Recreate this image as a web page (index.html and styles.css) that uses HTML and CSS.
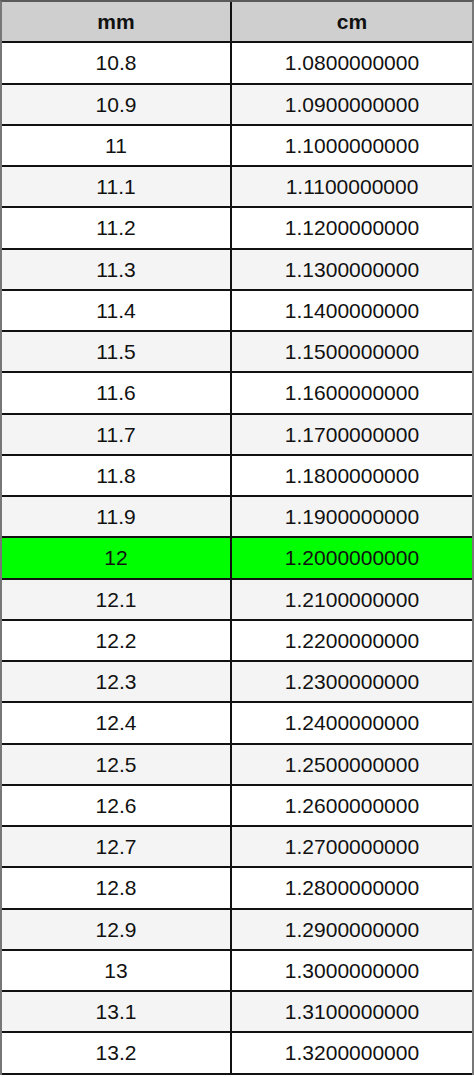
FILE: index.html
```html
<!DOCTYPE html>
<html>
<head>
<meta charset="utf-8">
<link rel="stylesheet" href="styles.css">
</head>
<body>
<div class="table">
  <div class="row head"><div class="cell">mm</div><div class="cell">cm</div></div>
  <div class="row"><div class="cell">10.8</div><div class="cell">1.0800000000</div></div>
  <div class="row alt"><div class="cell">10.9</div><div class="cell">1.0900000000</div></div>
  <div class="row"><div class="cell">11</div><div class="cell">1.1000000000</div></div>
  <div class="row alt"><div class="cell">11.1</div><div class="cell">1.1100000000</div></div>
  <div class="row"><div class="cell">11.2</div><div class="cell">1.1200000000</div></div>
  <div class="row alt"><div class="cell">11.3</div><div class="cell">1.1300000000</div></div>
  <div class="row"><div class="cell">11.4</div><div class="cell">1.1400000000</div></div>
  <div class="row alt"><div class="cell">11.5</div><div class="cell">1.1500000000</div></div>
  <div class="row"><div class="cell">11.6</div><div class="cell">1.1600000000</div></div>
  <div class="row alt"><div class="cell">11.7</div><div class="cell">1.1700000000</div></div>
  <div class="row"><div class="cell">11.8</div><div class="cell">1.1800000000</div></div>
  <div class="row alt"><div class="cell">11.9</div><div class="cell">1.1900000000</div></div>
  <div class="row hl"><div class="cell">12</div><div class="cell">1.2000000000</div></div>
  <div class="row alt"><div class="cell">12.1</div><div class="cell">1.2100000000</div></div>
  <div class="row"><div class="cell">12.2</div><div class="cell">1.2200000000</div></div>
  <div class="row alt"><div class="cell">12.3</div><div class="cell">1.2300000000</div></div>
  <div class="row"><div class="cell">12.4</div><div class="cell">1.2400000000</div></div>
  <div class="row alt"><div class="cell">12.5</div><div class="cell">1.2500000000</div></div>
  <div class="row"><div class="cell">12.6</div><div class="cell">1.2600000000</div></div>
  <div class="row alt"><div class="cell">12.7</div><div class="cell">1.2700000000</div></div>
  <div class="row"><div class="cell">12.8</div><div class="cell">1.2800000000</div></div>
  <div class="row alt"><div class="cell">12.9</div><div class="cell">1.2900000000</div></div>
  <div class="row"><div class="cell">13</div><div class="cell">1.3000000000</div></div>
  <div class="row alt"><div class="cell">13.1</div><div class="cell">1.3100000000</div></div>
  <div class="row"><div class="cell">13.2</div><div class="cell">1.3200000000</div></div>
</div>
</body>
</html>
```
FILE: styles.css
```css
html, body {
  margin: 0;
  padding: 0;
  background: #ffffff;
}
.table {
  width: 474px;
  box-sizing: border-box;
  border-top: 2px solid #5a5a5a;
  border-left: 2px solid #777777;
  border-right: 2px solid #777777;
  font-family: "Liberation Sans", Arial, sans-serif;
  font-size: 21px;
  color: #111111;
}
.row {
  display: grid;
  grid-template-columns: 228px 2px 1fr;
  height: 41.25px;
  box-sizing: border-box;
  border-bottom: 2px solid #111111;
  background: #ffffff;
}
.row::before {
  content: "";
  grid-column: 2;
  grid-row: 1;
  background: #111111;
}
.row .cell:first-child { grid-column: 1; grid-row: 1; }
.row .cell:last-child { grid-column: 3; grid-row: 1; }
.cell {
  display: flex;
  align-items: center;
  justify-content: center;
  line-height: 1;
}
.alt { background: #f4f4f4; }
.head { background: #cfcfcf; font-weight: bold; }
.hl { background: #00ff00; }
```
